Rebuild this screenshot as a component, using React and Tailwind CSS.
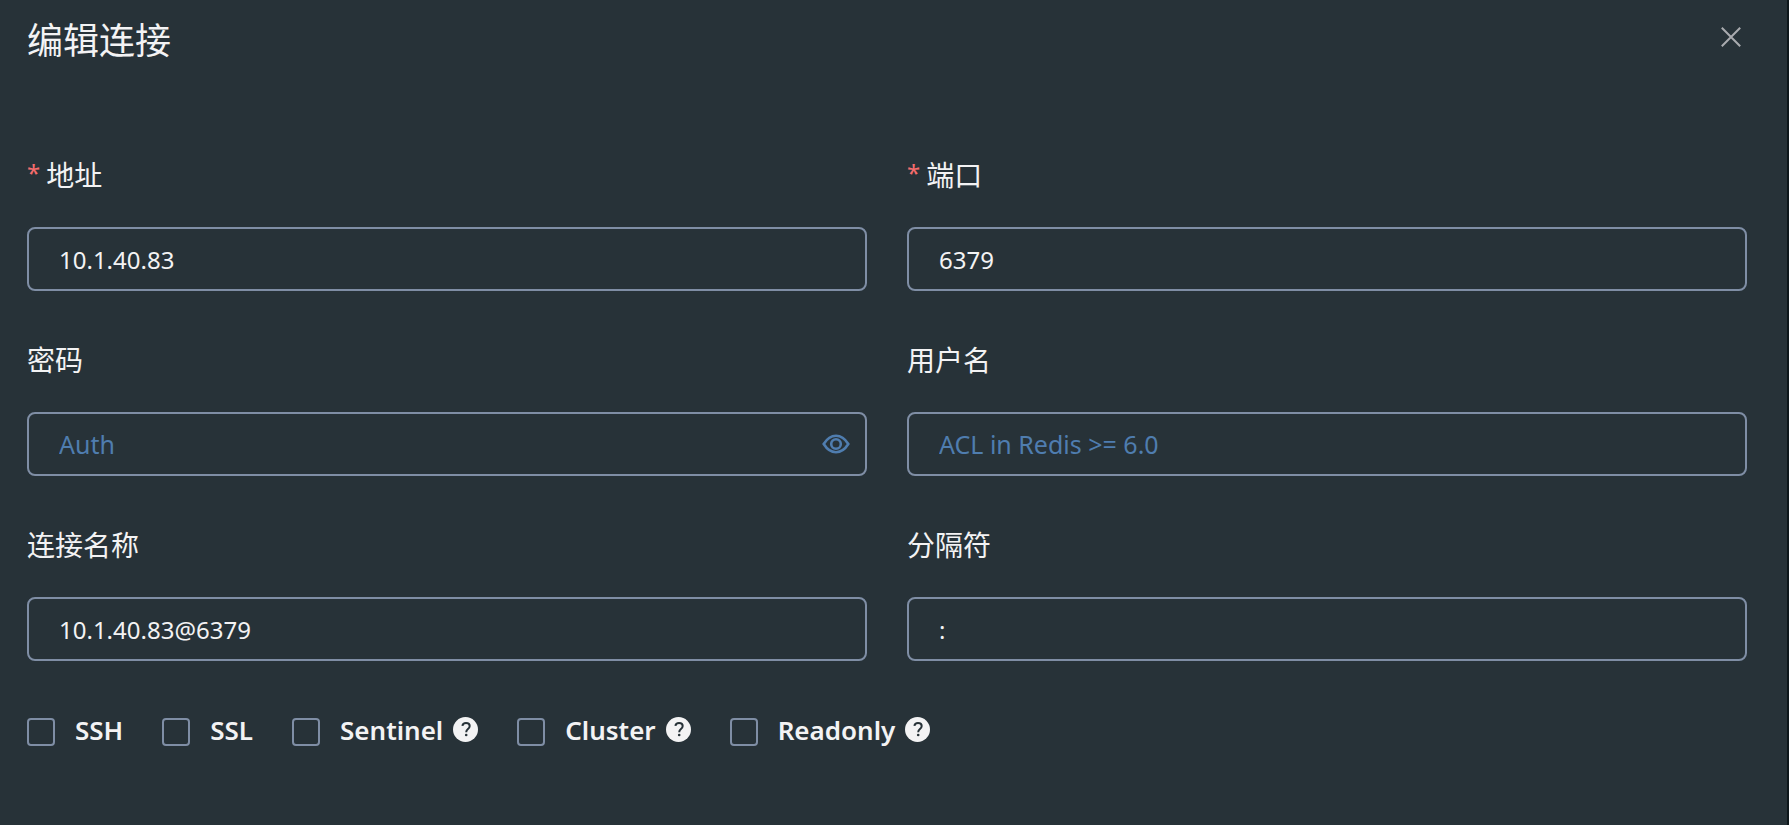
import React from "react";

function Field({ id, label, required, icon, ...input }) {
  return (
    <div className="flex min-w-0 flex-col gap-8">
      <label htmlFor={id} className="flex h-10 items-center text-[28px] leading-10">
        {required && <span className="mr-[6px] pb-1 text-[24px] leading-10 text-[#f56c6c]">*</span>}
        {label}
      </label>
      <div className="relative">
        <input
          id={id}
          className="h-16 w-full rounded-lg border-2 border-[#7f8ea5] bg-transparent px-[30px] text-[24px] text-[#f3f3f4] outline-none placeholder:text-[25px] placeholder:text-[#4f7daf] placeholder:opacity-100"
          {...input}
        />
        {icon}
      </div>
    </div>
  );
}

function EyeIcon() {
  return (
    <svg viewBox="0 0 28 20" className="h-5 w-7" fill="none" stroke="currentColor" strokeWidth="2.6">
      <path d="M1.700 10C5 4.700 9.200 1.800 14 1.800S23 4.700 26.300 10C23 15.300 18.800 18.200 14 18.200S5 15.300 1.700 10Z" />
      <circle cx="14" cy="10" r="4.800" />
    </svg>
  );
}

function HelpIcon() {
  return (
    <svg viewBox="0 0 25 25" className="h-[25px] w-[25px]" aria-hidden="true">
      <circle cx="12.5" cy="12.5" r="12.5" fill="currentColor" />
      <path
        d="M9.400 8.800C9.700 6.900 11.100 5.900 13 5.900C15.200 5.900 16.700 7.100 16.700 9C16.700 10.700 15.700 11.500 14.700 12.300C13.700 13.100 13.200 13.700 13.200 15.200"
        fill="none"
        stroke="#273238"
        strokeWidth="2"
      />
      <circle cx="13.200" cy="18" r="1.300" fill="#273238" />
    </svg>
  );
}

function Check({ label, help }) {
  return (
    <label className="flex items-center">
      <input
        type="checkbox"
        className="mt-1 mr-5 size-7 appearance-none rounded border-2 border-[#7f8ea5] bg-transparent checked:bg-[#409eff]"
      />
      <span className="text-[26px] leading-10 font-semibold">{label}</span>
      {help && (
        <span className="ml-[10px] pb-[2px]">
          <HelpIcon />
        </span>
      )}
    </label>
  );
}

export default function App() {
  return (
    <main
      className="min-h-screen border-r-2 border-[#0e171b] bg-[#273238] pt-5 pr-10 pb-16 pl-[27px] text-[#f3f3f4]"
      style={{ fontFamily: '"Noto Sans", "Noto Sans CJK SC", sans-serif' }}
    >
      <header className="flex items-start justify-between">
        <h1 className="text-[36px] leading-[42px]">编辑连接</h1>
        <button type="button" aria-label="关闭" className="px-[6px] py-[7px] text-[#a9abaf]">
          <svg viewBox="0 0 20 20" className="size-5" fill="none" stroke="currentColor" strokeWidth="2">
            <path d="M.8.8 19.200 19.200M19.200.8.8 19.200" />
          </svg>
        </button>
      </header>
      <form className="mt-[93px]">
        <div className="grid grid-cols-2 gap-x-10 gap-y-[49px]">
          <Field id="host" label="地址" required defaultValue="10.1.40.83" />
          <Field id="port" label="端口" required defaultValue="6379" />
          <Field
            id="auth"
            label="密码"
            type="password"
            placeholder="Auth"
            icon={
              <button type="button" aria-label="显示密码" className="absolute inset-y-0 right-[17px] flex items-center text-[#4f7daf]">
                <EyeIcon />
              </button>
            }
          />
          <Field id="username" label="用户名" placeholder="ACL in Redis >= 6.0" />
          <Field id="name" label="连接名称" defaultValue="10.1.40.83@6379" />
          <Field id="separator" label="分隔符" defaultValue=":" />
        </div>
        <div className="mt-[49px] flex flex-wrap gap-x-[39px] gap-y-4">
          <Check label="SSH" />
          <Check label="SSL" />
          <Check label="Sentinel" help />
          <Check label="Cluster" help />
          <Check label="Readonly" help />
        </div>
      </form>
    </main>
  );
}
